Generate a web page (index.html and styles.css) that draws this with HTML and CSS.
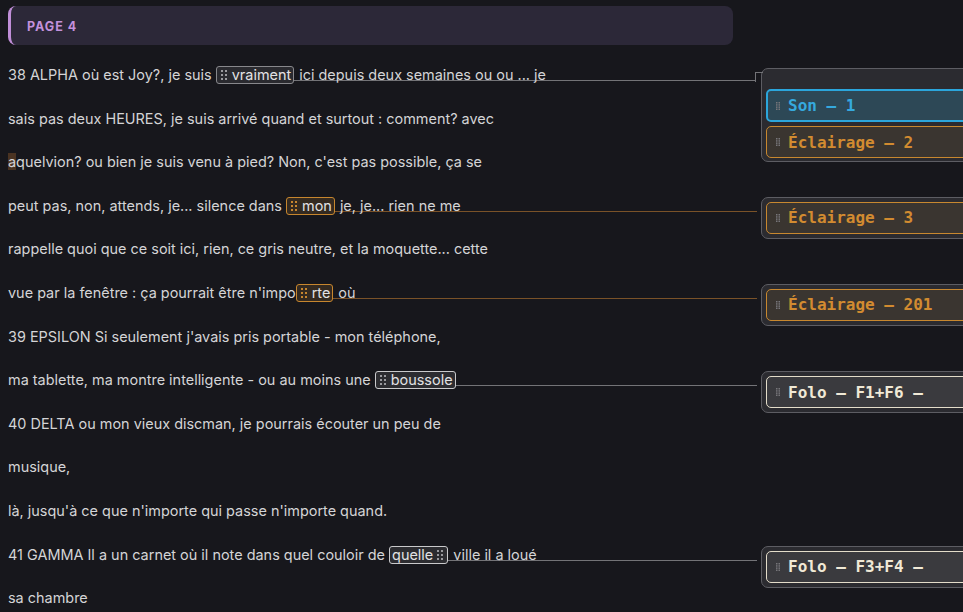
FILE: index.html
```html
<!DOCTYPE html>
<html lang="fr">
<head>
<meta charset="utf-8">
<title>Page 4</title>
<link rel="stylesheet" href="styles.css">
</head>
<body>
<div class="header"><span class="header-title">PAGE 4</span></div>

<div class="doc">
  <div class="card card-group" style="grid-row:1 / span 3">
    <div class="cue cue-son"><svg class="grip" width="4" height="8" viewBox="0 0 4 8"><rect x="0" y="0" width="1.5" height="1.5"/><rect x="2.5" y="0" width="1.5" height="1.5"/><rect x="0" y="2.2" width="1.5" height="1.5"/><rect x="2.5" y="2.2" width="1.5" height="1.5"/><rect x="0" y="4.4" width="1.5" height="1.5"/><rect x="2.5" y="4.4" width="1.5" height="1.5"/><rect x="0" y="6.5" width="1.5" height="1.5"/><rect x="2.5" y="6.5" width="1.5" height="1.5"/></svg><span>Son – 1</span></div>
    <div class="cue cue-light"><svg class="grip" width="4" height="8" viewBox="0 0 4 8"><rect x="0" y="0" width="1.5" height="1.5"/><rect x="2.5" y="0" width="1.5" height="1.5"/><rect x="0" y="2.2" width="1.5" height="1.5"/><rect x="2.5" y="2.2" width="1.5" height="1.5"/><rect x="0" y="4.4" width="1.5" height="1.5"/><rect x="2.5" y="4.4" width="1.5" height="1.5"/><rect x="0" y="6.5" width="1.5" height="1.5"/><rect x="2.5" y="6.5" width="1.5" height="1.5"/></svg><span>Éclairage – 2</span></div>
  </div>
  <div class="card" style="grid-row:4 / span 2">
    <div class="cue cue-light"><svg class="grip" width="4" height="8" viewBox="0 0 4 8"><rect x="0" y="0" width="1.5" height="1.5"/><rect x="2.5" y="0" width="1.5" height="1.5"/><rect x="0" y="2.2" width="1.5" height="1.5"/><rect x="2.5" y="2.2" width="1.5" height="1.5"/><rect x="0" y="4.4" width="1.5" height="1.5"/><rect x="2.5" y="4.4" width="1.5" height="1.5"/><rect x="0" y="6.5" width="1.5" height="1.5"/><rect x="2.5" y="6.5" width="1.5" height="1.5"/></svg><span>Éclairage – 3</span></div>
  </div>
  <div class="card" style="grid-row:6 / span 2">
    <div class="cue cue-light"><svg class="grip" width="4" height="8" viewBox="0 0 4 8"><rect x="0" y="0" width="1.5" height="1.5"/><rect x="2.5" y="0" width="1.5" height="1.5"/><rect x="0" y="2.2" width="1.5" height="1.5"/><rect x="2.5" y="2.2" width="1.5" height="1.5"/><rect x="0" y="4.4" width="1.5" height="1.5"/><rect x="2.5" y="4.4" width="1.5" height="1.5"/><rect x="0" y="6.5" width="1.5" height="1.5"/><rect x="2.5" y="6.5" width="1.5" height="1.5"/></svg><span>Éclairage – 201</span></div>
  </div>
  <div class="card" style="grid-row:8 / span 2">
    <div class="cue cue-folo"><svg class="grip" width="4" height="8" viewBox="0 0 4 8"><rect x="0" y="0" width="1.5" height="1.5"/><rect x="2.5" y="0" width="1.5" height="1.5"/><rect x="0" y="2.2" width="1.5" height="1.5"/><rect x="2.5" y="2.2" width="1.5" height="1.5"/><rect x="0" y="4.4" width="1.5" height="1.5"/><rect x="2.5" y="4.4" width="1.5" height="1.5"/><rect x="0" y="6.5" width="1.5" height="1.5"/><rect x="2.5" y="6.5" width="1.5" height="1.5"/></svg><span>Folo – F1+F6 –</span></div>
  </div>
  <div class="card" style="grid-row:12 / span 2">
    <div class="cue cue-folo"><svg class="grip" width="4" height="8" viewBox="0 0 4 8"><rect x="0" y="0" width="1.5" height="1.5"/><rect x="2.5" y="0" width="1.5" height="1.5"/><rect x="0" y="2.2" width="1.5" height="1.5"/><rect x="2.5" y="2.2" width="1.5" height="1.5"/><rect x="0" y="4.4" width="1.5" height="1.5"/><rect x="2.5" y="4.4" width="1.5" height="1.5"/><rect x="0" y="6.5" width="1.5" height="1.5"/><rect x="2.5" y="6.5" width="1.5" height="1.5"/></svg><span>Folo – F3+F4 –</span></div>
  </div>

  <div class="line link"><span>38 ALPHA où est Joy?, je suis&nbsp;</span><span class="chip"><svg class="dots" width="6" height="10" viewBox="0 0 6 10"><rect x="0" y="0" width="2" height="2"/><rect x="4" y="0" width="2" height="2"/><rect x="0" y="4" width="2" height="2"/><rect x="4" y="4" width="2" height="2"/><rect x="0" y="8" width="2" height="2"/><rect x="4" y="8" width="2" height="2"/></svg><span>vraiment</span></span><span class="tail tail-gray tail-first">ici depuis deux semaines ou ou ... je</span></div>
  <div class="line">sais pas deux HEURES, je suis arrivé quand et surtout : comment? avec</div>
  <div class="line"><span class="caret">a</span>quelvion? ou bien je suis venu à pied? Non, c'est pas possible, ça se</div>
  <div class="line link"><span>peut pas, non, attends, je... silence dans&nbsp;</span><span class="chip chip-orange"><svg class="dots" width="6" height="10" viewBox="0 0 6 10"><rect x="0" y="0" width="2" height="2"/><rect x="4" y="0" width="2" height="2"/><rect x="0" y="4" width="2" height="2"/><rect x="4" y="4" width="2" height="2"/><rect x="0" y="8" width="2" height="2"/><rect x="4" y="8" width="2" height="2"/></svg><span>mon</span></span><span class="tail tail-orange">je, je... rien ne me</span></div>
  <div class="line">rappelle quoi que ce soit ici, rien, ce gris neutre, et la moquette... cette</div>
  <div class="line link"><span>vue par la fenêtre : ça pourrait être n'impo</span><span class="chip chip-orange"><svg class="dots" width="6" height="10" viewBox="0 0 6 10"><rect x="0" y="0" width="2" height="2"/><rect x="4" y="0" width="2" height="2"/><rect x="0" y="4" width="2" height="2"/><rect x="4" y="4" width="2" height="2"/><rect x="0" y="8" width="2" height="2"/><rect x="4" y="8" width="2" height="2"/></svg><span>rte</span></span><span class="tail tail-orange">où</span></div>
  <div class="line">39 EPSILON Si seulement j'avais pris portable - mon téléphone,</div>
  <div class="line link"><span>ma tablette, ma montre intelligente - ou au moins une&nbsp;</span><span class="chip chip-light"><svg class="dots" width="6" height="10" viewBox="0 0 6 10"><rect x="0" y="0" width="2" height="2"/><rect x="4" y="0" width="2" height="2"/><rect x="0" y="4" width="2" height="2"/><rect x="4" y="4" width="2" height="2"/><rect x="0" y="8" width="2" height="2"/><rect x="4" y="8" width="2" height="2"/></svg><span>boussole</span></span><span class="tail tail-gray tail-tight">&nbsp;</span></div>
  <div class="line">40 DELTA ou mon vieux discman, je pourrais écouter un peu de</div>
  <div class="line">musique,</div>
  <div class="line">là, jusqu'à ce que n'importe qui passe n'importe quand.</div>
  <div class="line link"><span>41 GAMMA Il a un carnet où il note dans quel couloir de&nbsp;</span><span class="chip chip-light chip-end"><span>quelle</span><svg class="dots" width="6" height="10" viewBox="0 0 6 10"><rect x="0" y="0" width="2" height="2"/><rect x="4" y="0" width="2" height="2"/><rect x="0" y="4" width="2" height="2"/><rect x="4" y="4" width="2" height="2"/><rect x="0" y="8" width="2" height="2"/><rect x="4" y="8" width="2" height="2"/></svg></span><span class="tail tail-gray">ville il a loué</span></div>
  <div class="line">sa chambre</div>
</div>
</body>
</html>
```

FILE: styles.css
```css
* { box-sizing: border-box; }

html, body {
  margin: 0;
  height: 612px;
  overflow: hidden;
  background: #17171c;
}

body {
  padding: 6px 0 0 8px;
  font-family: Inter, "Liberation Sans", sans-serif;
  color: #d4d4d6;
}

.header {
  width: 725px;
  height: 39px;
  background: #2c2838;
  border-left: 3px solid #c08ed8;
  border-radius: 8px;
  display: flex;
  align-items: center;
  padding-left: 16px;
  padding-top: 2px;
}

.header-title {
  font-size: 12.5px;
  font-weight: 700;
  letter-spacing: 1px;
  color: #c391dc;
}

.doc {
  margin-top: 8px;
  display: grid;
  grid-template-columns: 749px 240px;
  grid-auto-rows: 43.6px;
  column-gap: 4px;
}

.line {
  grid-column: 1;
  font-size: 14.45px;
  line-height: 43.6px;
  white-space: nowrap;
}

.link {
  display: flex;
  align-items: baseline;
}

.caret {
  background: #4a3322;
}

.chip {
  display: inline-flex;
  align-items: center;
  gap: 5px;
  line-height: 16px;
  padding: 0 2px 0 4px;
  border: 1px solid #88888c;
  border-radius: 3px;
  background: #2a2a2f;
  color: #e2e2e4;
  white-space: nowrap;
}

.chip-end {
  gap: 4px;
  padding: 0 4px 0 2px;
}

.chip .dots {
  fill: #9a9a9e;
  flex: none;
}

.chip-orange {
  border-color: #c7862e;
  background: #342a20;
}

.chip-orange .dots {
  fill: #c7862e;
}

.chip-light {
  border-color: #c9c9cb;
  background: #2c2c30;
}

.tail {
  flex: 1;
  padding-left: 5px;
  background-repeat: no-repeat;
  background-position: 0 27px;
  background-size: 100% 1px;
}

.tail-tight { padding-left: 0; }

.tail-gray {
  background-image: linear-gradient(#737377, #737377);
}

.tail-first {
  margin-right: 1px;
}

.tail-orange {
  background-image: linear-gradient(#7a5228, #7a5228);
}

.card {
  grid-column: 2;
  align-self: start;
  margin-top: 13px;
  width: 240px;
  padding: 4px;
  border: 1px solid #5d5d63;
  border-radius: 7px;
  background: #2b2b30;
  display: flex;
  flex-direction: column;
  gap: 4px;
}

.card-group {
  position: relative;
  margin-top: 15px;
  padding-top: 20px;
  padding-bottom: 3px;
}

.card-group::before {
  content: "";
  position: absolute;
  left: -7px;
  top: 3px;
  width: 7px;
  height: 9px;
  border-top: 1px solid #737377;
  border-left: 1px solid #737377;
}

.cue {
  height: 32px;
  display: flex;
  align-items: center;
  gap: 8px;
  padding-left: 9px;
  border: 1px solid #c8882f;
  border-radius: 5px;
  background: #3a3530;
  font-family: "DejaVu Sans Mono", monospace;
  font-weight: 700;
  font-size: 16px;
  color: #d28b30;
  white-space: nowrap;
}

.cue .grip {
  fill: #77767a;
  flex: none;
}

.cue-son {
  height: 33px;
  border: 2px solid #2ba6dc;
  background: #2d4856;
  color: #35a9de;
  padding-left: 8px;
}

.cue-folo {
  border-color: #e4ddca;
  background: #3a3a3e;
  color: #f0e9d6;
}
```
